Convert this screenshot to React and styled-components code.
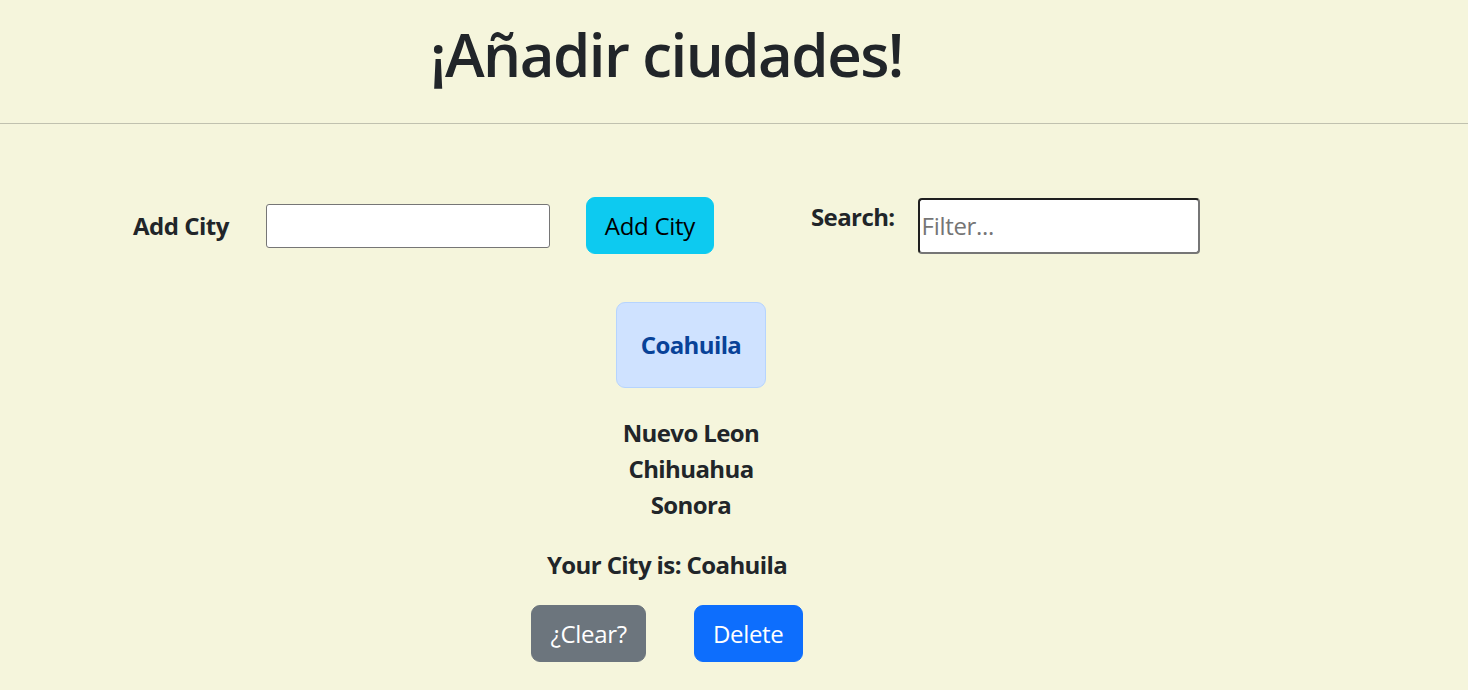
import React, { useState } from "react";
import styled, { createGlobalStyle } from "styled-components";

const GlobalStyle = createGlobalStyle`
  html, body {
    margin: 0;
    padding: 0;
    background-color: #f5f5dc;
  }
  body {
    font-family: "Open Sans", "Noto Sans", "Liberation Sans", sans-serif;
    font-size: 24px;
    line-height: 1.5;
    color: #212529;
  }
  * {
    box-sizing: border-box;
  }
`;

const App = () => {
  const [cities] = useState(["Coahuila", "Nuevo Leon", "Chihuahua", "Sonora"]);
  const [selected] = useState("Coahuila");

  return (
    <>
      <GlobalStyle />
      <Page>
        <Header>
          <Title>¡Añadir ciudades!</Title>
        </Header>

        <FormRow>
          <Label>Add City</Label>
          <CityInput type="text" />
          <Button variant="info">Add City</Button>
          <SearchLabel>Search:</SearchLabel>
          <SearchInput type="text" placeholder="Filter..." />
        </FormRow>

        <Results>
          <Selected>{selected}</Selected>
          <CityList>
            {cities
              .filter((c) => c !== selected)
              .map((c) => (
                <CityItem key={c}>{c}</CityItem>
              ))}
          </CityList>
        </Results>

        <Footer>
          <YourCity>Your City is: {selected}</YourCity>
          <Actions>
            <Button variant="secondary">¿Clear?</Button>
            <Button variant="primary">Delete</Button>
          </Actions>
        </Footer>
      </Page>
    </>
  );
};

const variants = {
  info: { bg: "#0dcaf0", color: "#000" },
  secondary: { bg: "#6c757d", color: "#fff" },
  primary: { bg: "#0d6efd", color: "#fff" },
};

const Page = styled.div`
  display: flex;
  flex-direction: column;
  min-height: 690px;
`;

const Header = styled.header`
  height: 124px;
  border-bottom: 1px solid #c0c1af;
  padding-left: 430px;
`;

const Title = styled.h1`
  margin: 0;
  padding-top: 18px;
  font-size: 60px;
  font-weight: 600;
  line-height: 1.2;
  letter-spacing: -1.55px;
`;

const FormRow = styled.div`
  display: flex;
  align-items: center;
  margin-top: 73px;
  padding-left: 133px;
`;

const Label = styled.span`
  font-weight: 700;
  letter-spacing: -0.5px;
  margin-right: 37px;
`;

const CityInput = styled.input`
  width: 284px;
  height: 44px;
  border: 1px solid #767676;
  border-radius: 3px;
  background: #fff;
  margin-right: 36px;
  font: inherit;
`;

const Button = styled.button`
  display: inline-flex;
  align-items: center;
  justify-content: center;
  height: 57px;
  padding: 0 18px;
  border: 1px solid ${(p) => variants[p.variant].bg};
  border-radius: 9px;
  background-color: ${(p) => variants[p.variant].bg};
  color: ${(p) => variants[p.variant].color};
  font-family: inherit;
  font-size: 24px;
  line-height: 1.5;
  letter-spacing: -0.3px;
`;

const SearchLabel = styled.span`
  align-self: flex-start;
  margin-top: 2px;
  margin-left: 97px;
  margin-right: 23px;
  font-weight: 700;
  letter-spacing: -0.6px;
`;

const SearchInput = styled.input`
  width: 282px;
  height: 56px;
  border: 2px solid;
  border-color: #1f1f1f #767676 #767676 #1f1f1f;
  border-radius: 4px;
  background: #fff;
  padding: 0 2px;
  font-family: inherit;
  font-size: 24px;
  letter-spacing: -0.3px;
  color: #212529;
  &::placeholder {
    color: #757575;
  }
  &:focus {
    outline: none;
  }
`;

const Results = styled.div`
  display: flex;
  flex-direction: column;
  align-items: center;
  width: 400px;
  margin-left: 491px;
  margin-top: 48px;
`;

const Selected = styled.div`
  padding: 24px;
  border: 1px solid #b6d4fe;
  border-radius: 9px;
  background-color: #cfe2ff;
  color: #084298;
  font-weight: 700;
  letter-spacing: -0.6px;
`;

const CityList = styled.ul`
  list-style: none;
  margin: 27px 0 0;
  padding: 0;
  text-align: center;
`;

const CityItem = styled.li`
  font-weight: 700;
  letter-spacing: -0.6px;
`;

const Footer = styled.div`
  display: flex;
  flex-direction: column;
  align-items: center;
  width: 400px;
  margin-left: 467px;
  margin-top: 24px;
`;

const YourCity = styled.div`
  font-weight: 700;
  letter-spacing: -0.6px;
`;

const Actions = styled.div`
  display: flex;
  gap: 48px;
  margin-top: 22px;
`;

export default App;
